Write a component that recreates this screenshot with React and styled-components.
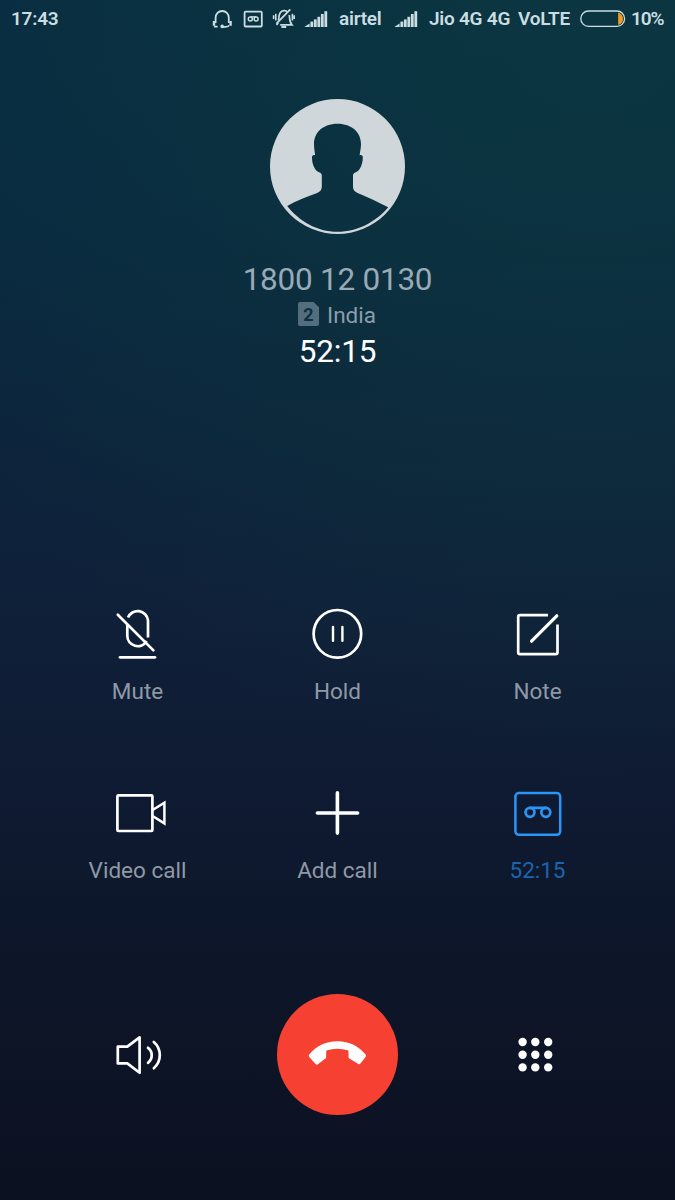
import styled, { createGlobalStyle } from 'styled-components';

const actions = [
    { id: 'mute', label: 'Mute', icon: <MuteIcon /> },
    { id: 'hold', label: 'Hold', icon: <HoldIcon /> },
    { id: 'note', label: 'Note', icon: <NoteIcon /> },
    { id: 'video', label: 'Video call', icon: <VideoIcon /> },
    { id: 'add', label: 'Add call', icon: <AddIcon /> },
    { id: 'record', label: '52:15', icon: <RecordIcon />, active: true },
];

function App() {
    return (
        <Screen>
            <GlobalStyle />
            <StatusBar>
                <StatusText>17:43</StatusText>
                <StatusGroup>
                    <HeadsetIcon />
                    <TapeIcon />
                    <SilentIcon />
                    <SignalIcon />
                    <StatusText $width="55px">airtel</StatusText>
                    <SignalIcon />
                    <StatusText $width="89px">Jio 4G 4G</StatusText>
                    <StatusText $width="62px">VoLTE</StatusText>
                    <BatteryIcon />
                    <StatusText $width="32px" $tight>10%</StatusText>
                </StatusGroup>
            </StatusBar>

            <Caller>
                <Avatar />
                <PhoneNumber>1800 12 0130</PhoneNumber>
                <Location>
                    <SimBadge>2</SimBadge>
                    India
                </Location>
                <Duration>52:15</Duration>
            </Caller>

            <Actions>
                {actions.map((action) => (
                    <Action key={action.id} $active={action.active}>
                        {action.icon}
                        <Label $active={action.active}>{action.label}</Label>
                    </Action>
                ))}
            </Actions>

            <BottomBar>
                <Action aria-label="Speaker"><SpeakerIcon /></Action>
                <EndCall aria-label="End call"><HangUpIcon /></EndCall>
                <Action aria-label="Keypad"><KeypadIcon /></Action>
            </BottomBar>
        </Screen>
    );
}

/* Status bar icons */

function HeadsetIcon() {
    return (
        <StatusSvg $w={22} $gap={9} viewBox="0 0 22 20">
            <path d="M4.6 14V8.8A6.6 6.8 0 0 1 17.8 8.8V14" strokeWidth="1.8" />
            <path d="M3 12V16.8M19.6 12V16.8" strokeWidth="2.4" />
            <path d="M3 17.6H6.6M11.2 17.8H14.8Q17.4 17.8 18.2 16.4" strokeWidth="1.7" />
            <circle cx="11.2" cy="17.4" r="1.8" fill="currentColor" stroke="none" />
        </StatusSvg>
    );
}

function TapeIcon() {
    return (
        <StatusSvg $w={21} $gap={9} viewBox="0 0 21 20">
            <rect x="2.6" y="2.7" width="17.2" height="14.8" rx="1" strokeWidth="1.8" />
            <circle cx="8.3" cy="9.9" r="2" strokeWidth="1.5" />
            <circle cx="14.1" cy="9.9" r="2" strokeWidth="1.5" />
            <path d="M8.3 7.9H14.1" strokeWidth="1.4" />
        </StatusSvg>
    );
}

function SilentIcon() {
    return (
        <StatusSvg $w={23} $gap={9} viewBox="0 0 23 20">
            <path d="M6.4 11.6C7 9.6 6.5 6.6 8.1 4C10 1 13.8 1 15.4 3M17.3 6C17.7 9.4 17.2 12.8 19.9 15.8H8.2M6.4 14.2L4.4 15.8" strokeWidth="1.7" />
            <path d="M18.3 .4L4.4 14.6" strokeWidth="1.8" />
            <path d="M9.4 18H14.2" strokeWidth="2" />
            <path d="M3.8 4.8V11.4M1.6 6.2V10M20.4 4.8V11.4M22.2 6.2V10" strokeWidth="1.6" />
        </StatusSvg>
    );
}

function SignalIcon() {
    return (
        <StatusSvg $w={24} $gap={11} viewBox="0 0 24 20">
            <g fill="currentColor" stroke="none">
                <path d="M.3 18L5.6 14.4V18Z" />
                <rect x="6.4" y="12.6" width="2.8" height="5.4" />
                <rect x="9.9" y="10.4" width="2.8" height="7.6" />
                <rect x="13.4" y="7.8" width="2.8" height="10.2" />
                <rect x="16.9" y="5" width="2.8" height="13" />
                <rect x="20.4" y="2.2" width="2.8" height="15.8" />
            </g>
        </StatusSvg>
    );
}

function BatteryIcon() {
    return (
        <StatusSvg $w={46} $gap={5} viewBox="0 0 46 20">
            <path d="M38.2 3.4Q43 5 43 9.7T38.2 16Z" fill="#f59a1c" stroke="none" />
            <rect x=".8" y="2" width="43.8" height="15.4" rx="7.7" strokeWidth="1.3" />
        </StatusSvg>
    );
}

/* Contact placeholder, the person is cut out of the disc */

function Avatar() {
    return (
        <AvatarSvg viewBox="0 0 135 135">
            <path
                fillRule="evenodd"
                d="M67.5 0A67.5 67.5 0 1 1 67.5 135A67.5 67.5 0 1 1 67.5 0Z
                   M67.5 24.7C53 24.7 44 33.5 44 45C44 49 44.6 52 45.2 56.3C43 55.6 42 56.6 42 58.5
                   C42 62 42.7 64.6 43.6 67C45 70.8 47.4 72.8 49.6 73.6C51 74.2 51.8 75 51.8 77V87.6
                   C51.8 91 50.4 92.6 47.2 93.9C36 98 26.5 101.6 17.2 107C29 122 47 132.8 67.5 132.8
                   S106 122.8 118.2 108.3C109 103.4 98.5 98.5 87.6 93.9C84.4 92.6 83 91 83 87.6V77
                   C83 75 83.8 74.2 85.2 73.6C87.4 72.8 89.8 70.8 91.2 67C92 64.6 92.8 62 92.8 58.5
                   C92.8 56.6 91.8 55.6 89.6 56.3C90.2 52 91 49 91 45C91 33.5 82 24.7 67.5 24.7Z"
            />
        </AvatarSvg>
    );
}

/* Call control icons */

function MuteIcon() {
    return (
        <IconSvg viewBox="0 0 61 60">
            <path strokeLinecap="butt" d="M21 13.6A10.4 10.4 0 0 1 41 16.4V33.6" />
            <path strokeLinecap="butt" d="M20.3 20.2V31.6A10.35 10.35 0 0 0 39.6 37" />
            <path d="M10.8 10.8L46.4 46.4" />
            <path d="M13 53.3H48" />
        </IconSvg>
    );
}

function HoldIcon() {
    return (
        <IconSvg viewBox="0 0 61 60">
            <circle cx="30.4" cy="29.8" r="23.8" />
            <path d="M26 23V36.8M35.4 23V36.8" strokeWidth="2.4" />
        </IconSvg>
    );
}

function NoteIcon() {
    return (
        <IconSvg viewBox="0 0 61 60">
            <path strokeLinecap="butt" d="M41 11.2H13Q11.2 11.2 11.2 13V48.3Q11.2 50.2 13 50.2H48.6Q50.5 50.2 50.5 48.3V20.5" />
            <path d="M24.6 37.2L49.8 11.8" strokeWidth="3.2" />
        </IconSvg>
    );
}

function VideoIcon() {
    return (
        <IconSvg viewBox="0 0 61 60">
            <rect x="10.4" y="12.4" width="35" height="35.6" rx="1" />
            <path d="M46 26.8L57.4 19.8V40.4L46 33.2" strokeLinejoin="miter" strokeWidth="2.5" />
        </IconSvg>
    );
}

function AddIcon() {
    return (
        <IconSvg viewBox="0 0 61 60">
            <path d="M10.4 30H50.6M30.4 9.9V50.1" strokeWidth="3.6" />
        </IconSvg>
    );
}

function RecordIcon() {
    return (
        <IconSvg viewBox="0 0 61 60">
            <rect x="8.4" y="10" width="44.8" height="41.8" rx="3.5" strokeWidth="2.5" />
            <circle cx="23" cy="29.3" r="4.5" />
            <circle cx="38.8" cy="29.3" r="4.5" />
            <path d="M23 24.8H38.8" />
        </IconSvg>
    );
}

function SpeakerIcon() {
    return (
        <IconSvg viewBox="0 0 61 60">
            <path d="M10.8 21.7H20.3L32.6 12.4V47.8L20.3 38.4H10.8Z" />
            <path d="M41 22.8A9.4 9.4 0 0 1 41 37.8" />
            <path d="M46.8 17A17.3 17.3 0 0 1 46.8 43.2" />
        </IconSvg>
    );
}

function HangUpIcon() {
    return (
        <svg width="121" height="121" viewBox="0 0 121 121" fill="#fff">
            <path d="M32.2 60.6C38.6 52.2 48.6 47.2 60.4 47.2S82 52.2 88.6 60.6Q89.4 61.8 88.6 63L83.4 69.6Q82.5 70.6 81.3 69.9L71.6 64L71.4 56.6Q60.4 52.8 49.3 56.6L49.1 64L40.6 70.5Q39.6 71 38.8 70.2L32.3 63Q31.2 61.7 32.2 60.6Z" />
        </svg>
    );
}

function KeypadIcon() {
    return (
        <IconSvg viewBox="0 0 61 60">
            {[17, 29.7, 42.4].map((y) =>
                [15.6, 28.3, 41.2].map((x) => (
                    <circle key={`${x}-${y}`} cx={x} cy={y} r="4.2" fill="currentColor" stroke="none" />
                ))
            )}
        </IconSvg>
    );
}

const GlobalStyle = createGlobalStyle`
    body {
        margin: 0;
        background: #0c1121;
    }
`

const Screen = styled.div`
    width: 675px;
    height: 1200px;
    overflow: hidden;
    font-family: Roboto, "Liberation Sans", sans-serif;
    color: #fff;
    background:
        radial-gradient(ellipse 760px 760px at 88% 2%, rgba(14, 64, 64, 0.5), rgba(14, 62, 62, 0.34) 45%, rgba(14, 60, 62, 0) 100%),
        linear-gradient(180deg, #082c42 0, #092a41 200px, #0c253d 400px, #0f2039 600px, #0f1b33 780px, #0d1629 960px, #0c1121 1200px);
`

const StatusBar = styled.header`
    display: flex;
    justify-content: space-between;
    align-items: center;
    height: 38px;
    padding: 0 12px 0 11px;
    color: #c9dde2;
`

const StatusGroup = styled.div`
    display: flex;
    align-items: center;
`

const StatusText = styled.span`
    width: ${(props) => props.$width || 'auto'};
    font-size: 19px;
    font-weight: 600;
    line-height: 38px;
    letter-spacing: ${(props) => (props.$tight ? '-1.1px' : '-0.25px')};
    white-space: nowrap;
`

const StatusSvg = styled.svg`
    width: ${(props) => props.$w}px;
    height: 20px;
    margin-right: ${(props) => props.$gap}px;
    fill: none;
    stroke: currentColor;
    stroke-width: 1.6;
`

const Caller = styled.section`
    display: flex;
    flex-direction: column;
    align-items: center;
    box-sizing: border-box;
    height: 505px;
    padding-top: 61px;
`

const AvatarSvg = styled.svg`
    width: 135px;
    height: 135px;
    fill: #cfd7db;
`

const PhoneNumber = styled.h1`
    margin: 27px 0 0;
    font-size: 31.5px;
    font-weight: 400;
    line-height: 38px;
    letter-spacing: -0.25px;
    color: #9aaab5;
`

const Location = styled.div`
    display: flex;
    align-items: center;
    gap: 8px;
    height: 32px;
    margin: 0 0 2px -1px;
    font-size: 22.5px;
    color: #8b9eac;
`

const SimBadge = styled.span`
    width: 21px;
    height: 24px;
    margin-top: -2px;
    border-radius: 2px;
    background: #536e7e;
    clip-path: polygon(0 0, 74% 0, 100% 22%, 100% 100%, 0 100%);
    color: #0c2f42;
    font-size: 18px;
    font-weight: 700;
    line-height: 25px;
    text-align: center;
`

const Duration = styled.div`
    font-size: 31.5px;
    line-height: 38px;
    letter-spacing: -0.2px;
`

const Actions = styled.section`
    display: grid;
    grid-template-columns: repeat(3, 200px);
    justify-content: center;
    row-gap: 77px;
    padding-top: 61px;
`

const Action = styled.button`
    display: flex;
    flex-direction: column;
    align-items: center;
    gap: 12px;
    padding: 0;
    border: none;
    background: none;
    font-family: inherit;
    color: ${(props) => (props.$active ? '#2b95f7' : '#fff')};
`

const Label = styled.span`
    font-size: 22.5px;
    line-height: 30px;
    color: ${(props) => (props.$active ? '#1c64ad' : '#8f99a6')};
`

const IconSvg = styled.svg`
    width: 61px;
    height: 60px;
    fill: none;
    stroke: currentColor;
    stroke-width: 2.7;
    stroke-linecap: round;
    stroke-linejoin: round;
`

const BottomBar = styled.footer`
    display: grid;
    grid-template-columns: repeat(3, 200px);
    justify-content: center;
    align-items: center;
    justify-items: center;
    margin-top: 109px;
`

const EndCall = styled.button`
    display: flex;
    width: 121px;
    height: 121px;
    padding: 0;
    border: none;
    border-radius: 50%;
    background: #f64132;
`

export default App;
